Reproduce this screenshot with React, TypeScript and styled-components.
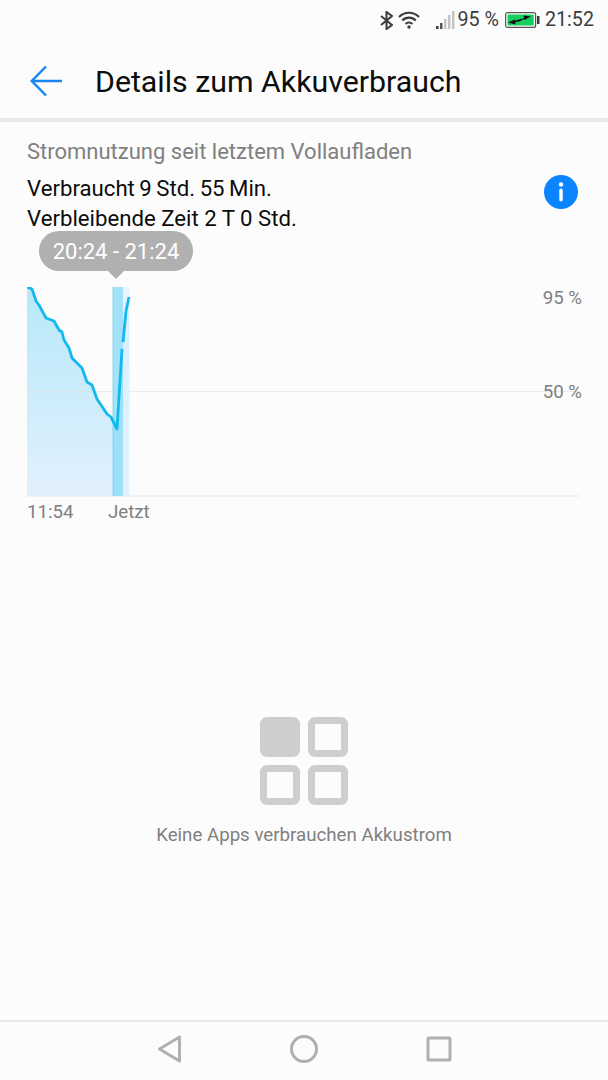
import styled, { createGlobalStyle } from 'styled-components';

const GlobalStyle = createGlobalStyle`
  html, body {
    margin: 0;
    padding: 0;
    background: #fcfcfc;
  }
  * {
    box-sizing: border-box;
  }
`

const Page = styled.div`
  width: 608px;
  height: 1080px;
  display: flex;
  flex-direction: column;
  background: #fcfcfc;
  font-family: Roboto, "Liberation Sans", sans-serif;
  overflow: hidden;
`

const StatusBar = styled.div`
  height: 38px;
  padding: 2px 14px 0 0;
  display: flex;
  align-items: center;
  justify-content: flex-end;
  color: #3c3c3c;
  font-size: 19.7px;
`

const StatusText = styled.span<{ $left?: number }>`
  margin-left: ${p => p.$left ?? 0}px;
  line-height: 1;
`

const StatusIcon = styled.svg<{ $left?: number }>`
  display: block;
  margin-left: ${p => p.$left ?? 0}px;
`

const Header = styled.header`
  height: 84px;
  padding: 6px 0 0 30px;
  display: flex;
  align-items: center;
  gap: 32px;
  border-bottom: 4px solid #e8e8e8;
`

const Title = styled.h1`
  margin: 0;
  font-size: 30.3px;
  font-weight: 400;
  color: #0c0c0c;
`

const Summary = styled.section`
  padding: 17px 30px 0 27px;
  display: flex;
  flex-direction: column;
`

const Caption = styled.div`
  font-size: 22px;
  line-height: 26px;
  color: #808080;
  margin-bottom: 8px;
`

const SummaryRow = styled.div`
  display: flex;
  justify-content: space-between;
`

const Lines = styled.div`
  font-size: 22.2px;
  line-height: 30px;
  color: #0c0c0c;
`

const Line = styled.div<{ $wordGap?: number }>`
  word-spacing: ${p => p.$wordGap ?? 0}px;
`

const InfoButton = styled.svg`
  width: 34px;
  height: 34px;
  margin-top: 2px;
`

const ChartWrap = styled.div`
  position: relative;
  margin: -2px 28px 0 27px;
  padding-top: 56px;
`

const Tooltip = styled.div`
  position: absolute;
  top: 0;
  left: 12px;
  width: 154px;
  height: 40px;
  border-radius: 20px;
  background: #b0b0b0;
  color: #fff;
  font-size: 22px;
  display: flex;
  align-items: center;
  justify-content: center;

  &::after {
    content: '';
    position: absolute;
    left: 69px;
    top: 40px;
    border-left: 8px solid transparent;
    border-right: 8px solid transparent;
    border-top: 8px solid #b0b0b0;
  }
`

const ChartArea = styled.div`
  position: relative;
  height: 210px;
`

const PlotSvg = styled.svg`
  display: block;
  width: 553px;
  height: 210px;
`

const AxisLabel = styled.span<{ $top: number }>`
  position: absolute;
  right: -2px;
  top: ${p => p.$top}px;
  font-size: 18.7px;
  line-height: 20px;
  color: #808080;
`

const TimeAxis = styled.div`
  display: flex;
  padding-top: 4px;
  font-size: 18.7px;
  line-height: 22px;
  color: #808080;
`

const TimeLabel = styled.span<{ $width: number }>`
  width: ${p => p.$width}px;
`

const EmptyState = styled.div`
  flex: 1;
  display: flex;
  flex-direction: column;
  align-items: center;
  padding-top: 194px;
`

const AppGrid = styled.div`
  display: grid;
  grid-template-columns: 40px 40px;
  grid-template-rows: 40px 40px;
  gap: 8px;
`

const AppCell = styled.div<{ $filled?: boolean }>`
  border-radius: 7px;
  border: 7px solid #cecece;
  background: ${p => (p.$filled ? '#cecece' : 'transparent')};
`

const EmptyText = styled.p`
  margin: 18px 0 0;
  font-size: 18.7px;
  line-height: 24px;
  color: #808080;
`

const NavBar = styled.nav`
  height: 60px;
  border-top: 2px solid #e8e8e8;
  display: flex;
  align-items: center;
  justify-content: center;
  gap: 105px;
  padding-bottom: 4px;
`

const NavIcon = styled.svg`
  width: 30px;
  height: 30px;
  fill: none;
  stroke: #b0b0b0;
  stroke-width: 3;
  stroke-linejoin: round;
`

const linePoints = [
  [0, 0], [5, 2], [9, 14], [12, 18], [19, 31], [27, 34], [32, 43], [35, 45], [37, 53], [42, 61],
  [45, 71], [55, 81], [60, 95], [65, 98], [70, 112], [80, 127], [84, 130], [90, 142], [95, 62],
]
const lineTail = [[96, 55], [99, 24], [102, 10]]

const toPath = (pts: number[][]) => pts.map(p => p.join(',')).join(' ');

const BatteryChart = () => (
  <PlotSvg viewBox="0 0 553 210">
    <defs>
      <linearGradient id="fillArea" x1="0" y1="0" x2="0" y2="1">
        <stop offset="0" stopColor="#b6e9f9" />
        <stop offset="1" stopColor="#e2f0fd" />
      </linearGradient>
    </defs>
    <polygon points={`${toPath(linePoints)} ${toPath(lineTail)} 102,209 0,209`} fill="url(#fillArea)" />
    <line x1="0" y1="104.5" x2="553" y2="104.5" stroke="#dcdcdc" strokeOpacity="0.55" />
    <line x1="0" y1="209" x2="553" y2="209" stroke="#e8e8e8" />
    <rect x="90" y="0" width="12.5" height="209" fill="#e2f2fd" opacity="0.75" />
    <rect x="85.7" y="0" width="10.3" height="209" fill="#8fdcf8" opacity="0.8" />
    <rect x="85.7" y="0" width="1" height="209" fill="#6fd2f6" opacity="0.7" />
    <polyline points={toPath(linePoints)} fill="none" stroke="#12b9ef" strokeWidth="2.8" strokeLinejoin="round" />
    <polyline points={toPath(lineTail)} fill="none" stroke="#12b9ef" strokeWidth="2.8" strokeLinejoin="round" />
  </PlotSvg>
)

export default function App() {
  return <Page>
    <GlobalStyle />
    <StatusBar>
      <StatusIcon width="13" height="19" viewBox="0 0 13 19" fill="none" stroke="#3c3c3c" strokeWidth="2">
        <path d="M1 5l11 9-5.5 4V1L12 5 1 14" />
      </StatusIcon>
      <StatusIcon $left={5} width="22" height="18" viewBox="0 0 22 18" fill="none" stroke="#3c3c3c" strokeWidth="2.1">
        <path d="M1 6c5.5-5.6 14.5-5.6 20 0" />
        <path d="M4.2 9.5c3.8-3.8 9.8-3.8 13.6 0" />
        <path d="M7.5 13c2-1.900 5-1.900 7 0" />
        <circle cx="11" cy="16" r="1.7" fill="#3c3c3c" stroke="none" />
      </StatusIcon>
      <StatusIcon $left={16} width="19" height="18" viewBox="0 0 19 18">
        <rect x="0" y="15" width="2.5" height="3" fill="#3c3c3c" />
        <rect x="4" y="12" width="2.5" height="6" fill="#555" />
        <rect x="8" y="8" width="2.5" height="10" fill="#c4c4c4" />
        <rect x="12" y="4" width="2.5" height="14" fill="#c4c4c4" />
        <rect x="16" y="0" width="2.5" height="18" fill="#c4c4c4" />
      </StatusIcon>
      <StatusText $left={3}>95 %</StatusText>
      <StatusIcon $left={6} width="35" height="16" viewBox="0 0 35 16">
        <rect x="0.6" y="0.6" width="30" height="14.8" rx="2" fill="#fcfcfc" stroke="#555" strokeWidth="1.2" />
        <rect x="2.5" y="2.5" width="26.2" height="11" fill="#12d060" />
        <rect x="32" y="4" width="2.5" height="8" fill="#3c3c3c" />
        <polygon points="12,8 19,6.2 18.6,3.4 26,4.6 19.5,8 19.2,7.2 13,9" fill="#111" />
        <polygon points="2.800,10.500 9.500,7.500 9.800,8.600 16.500,7.600 16,9 10.200,10.200 10.500,12.400" fill="#111" />
      </StatusIcon>
      <StatusText $left={5}>21:52</StatusText>
    </StatusBar>

    <Header>
      <svg width="33" height="32" viewBox="0 0 33 32" fill="none" stroke="#1a86f2" strokeWidth="2.5">
        <path d="M32 16H2M16 1.5L1.8 16 16 30.5" />
      </svg>
      <Title>Details zum Akkuverbrauch</Title>
    </Header>

    <Summary>
      <Caption>Stromnutzung seit letztem Vollaufladen</Caption>
      <SummaryRow>
        <Lines>
          <Line $wordGap={-1}>Verbraucht 9 Std. 55 Min.</Line>
          <Line>Verbleibende Zeit 2 T 0 Std.</Line>
        </Lines>
        <InfoButton viewBox="0 0 34 34">
          <circle cx="17" cy="17" r="17" fill="#0a84ff" />
          <circle cx="17" cy="9.5" r="2.2" fill="#fff" />
          <rect x="15.3" y="13.5" width="3.4" height="13" rx="1.7" fill="#fff" />
        </InfoButton>
      </SummaryRow>
    </Summary>

    <ChartWrap>
      <Tooltip>20:24 - 21:24</Tooltip>
      <ChartArea>
        <BatteryChart />
        <AxisLabel $top={1}>95 %</AxisLabel>
        <AxisLabel $top={95}>50 %</AxisLabel>
      </ChartArea>
      <TimeAxis>
        <TimeLabel $width={81}>11:54</TimeLabel>
        <TimeLabel $width={50}>Jetzt</TimeLabel>
      </TimeAxis>
    </ChartWrap>

    <EmptyState>
      <AppGrid>
        <AppCell $filled />
        <AppCell />
        <AppCell />
        <AppCell />
      </AppGrid>
      <EmptyText>Keine Apps verbrauchen Akkustrom</EmptyText>
    </EmptyState>

    <NavBar>
      <NavIcon viewBox="0 0 30 30">
        <path d="M5.5 15L25.5 3v24z" />
      </NavIcon>
      <NavIcon viewBox="0 0 30 30">
        <circle cx="15" cy="15" r="12.5" />
      </NavIcon>
      <NavIcon viewBox="0 0 30 30">
        <rect x="4" y="4" width="22" height="22" rx="1" />
      </NavIcon>
    </NavBar>
  </Page>
}
